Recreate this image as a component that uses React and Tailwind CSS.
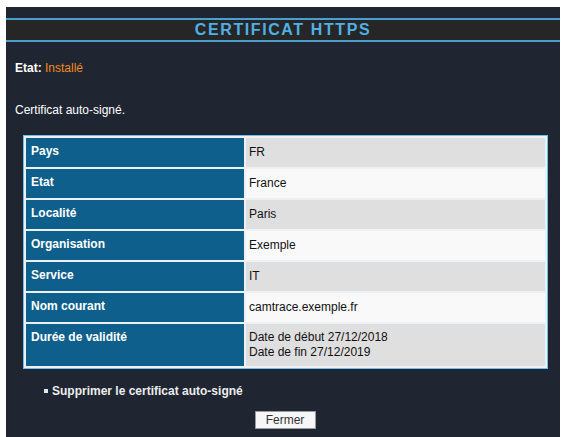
import React from "react";

const rows = [
  { label: "Pays", value: ["FR"] },
  { label: "Etat", value: ["France"] },
  { label: "Localité", value: ["Paris"] },
  { label: "Organisation", value: ["Exemple"] },
  { label: "Service", value: ["IT"] },
  { label: "Nom courant", value: ["camtrace.exemple.fr"] },
  {
    label: "Durée de validité",
    value: ["Date de début 27/12/2018", "Date de fin 27/12/2019"],
  },
];

const App = () => {
  return (
    <div className="min-h-screen bg-white pt-[7px] pl-[6px] font-['Liberation_Sans',Arial,sans-serif]">
      <div className="w-[554px] h-[430px] bg-[#1f2631] pt-[11px] text-[12px]">
        {/* Title bar */}
        <div className="h-[24px] border-t-2 border-b-2 border-t-[#4b9fcf] border-b-[#4b9fcf] bg-[#262626] flex items-center justify-center">
          <h1 className="text-[16px] font-bold tracking-[1.6px] text-[#4fb0e6] leading-none">
            CERTIFICAT HTTPS
          </h1>
        </div>

        <div className="pl-[9px] pt-[19px]">
          <p className="font-bold text-white leading-[14px]">
            Etat: <span className="font-normal text-[#f28a1e]">Installé</span>
          </p>
          <p className="text-white leading-[14px] mt-[28px]">
            Certificat auto-signé.
          </p>
        </div>

        {/* Certificate details */}
        <table className="ml-[17px] mt-[18px] w-[525px] border-separate border-spacing-[2px] border border-[#6cc0ea] bg-[#eef1f4]">
          <tbody>
            {rows.map((row, i) => (
              <tr key={row.label}>
                <td
                  className={`w-[218px] bg-[#0e5f8c] align-top pl-[5px] pt-[6px] font-bold text-white leading-[14px] ${
                    row.value.length > 1 ? "h-[42px]" : "h-[29px]"
                  }`}
                >
                  {row.label}
                </td>
                <td
                  className={`align-middle pl-[3px] text-[#111] leading-[15px] ${
                    i % 2 === 0 ? "bg-[#dfdfdf]" : "bg-[#f9f9f9]"
                  }`}
                >
                  {row.value.map((line) => (
                    <div key={line}>{line}</div>
                  ))}
                </td>
              </tr>
            ))}
          </tbody>
        </table>

        <div className="pl-[38px] mt-[15px] flex items-center gap-[4px] font-bold text-[#ececec] leading-[14px]">
          <span className="w-[4px] h-[4px] bg-[#e6e6e6]" />
          <span>Supprimer le certificat auto-signé</span>
        </div>

        <div className="flex justify-center mt-[13px] pl-[4px]">
          <button className="w-[61px] h-[18px] bg-[#f6f6f8] border border-[#9a9a9a] text-[12px] text-[#333] leading-none">
            Fermer
          </button>
        </div>
      </div>
    </div>
  );
};

export default App;
